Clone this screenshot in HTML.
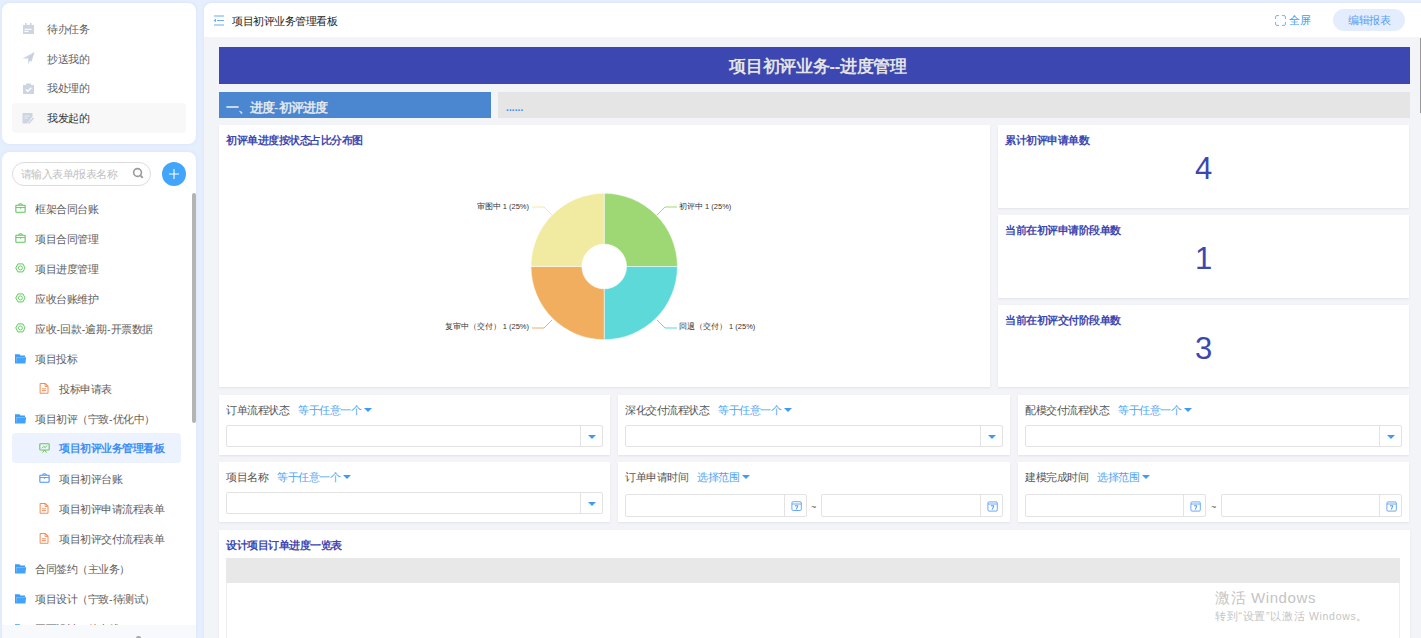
<!DOCTYPE html>
<html><head><meta charset="utf-8">
<style>
*{box-sizing:border-box;margin:0;padding:0}
html,body{width:1421px;height:638px;overflow:hidden}
body{background:#e6effd;font-family:"Liberation Sans",sans-serif;color:#333;position:relative}
.abs{position:absolute}
.panel{position:absolute;background:#fff;border-radius:8px;box-shadow:0 0 4px rgba(120,150,210,0.12)}
.si{position:absolute;font-size:10.5px;letter-spacing:-0.5px;color:#606060;line-height:14px;white-space:nowrap}
.ico{position:absolute}
.card{position:absolute;background:#fff;box-shadow:0 1px 2px rgba(20,20,60,0.07)}
.ctitle{position:absolute;font-size:10.5px;letter-spacing:-0.5px;font-weight:bold;color:#3c47b1;white-space:nowrap;line-height:12px}
.lbl{position:absolute;font-size:10.5px;letter-spacing:-0.5px;color:#555;white-space:nowrap;line-height:12px}
.pl{font-size:7.5px;color:#333;line-height:10px;white-space:nowrap}
.blu{color:#4aa3f5}
.inp{position:absolute;border:1px solid #e3e3e3;border-radius:2px;background:#fff}
.inp .btn{position:absolute;right:0;top:0;bottom:0;border-left:1px solid #e3e3e3}
.tri{position:absolute;width:0;height:0;border-left:4px solid transparent;border-right:4px solid transparent;border-top:4px solid #3d9bf5}
</style></head><body>

<!-- sidebar panel 1 -->
<div class="panel" style="left:2px;top:3px;width:194px;height:140.5px"></div>
<div class="abs" style="left:12px;top:103px;width:174px;height:30px;background:#f8f8f9;border-radius:4px"></div>

<svg class="ico" style="left:22px;top:22px" width="13" height="13" viewBox="0 0 13 13"><rect x="1" y="3" width="11" height="9" fill="#cdd5e3"/><rect x="3" y="1" width="1.6" height="3" fill="#cdd5e3"/><rect x="8" y="1" width="1.6" height="3" fill="#cdd5e3"/><rect x="2.5" y="6.8" width="7" height="1.1" fill="#fff"/><rect x="2.5" y="8.9" width="4" height="1.1" fill="#fff"/></svg>
<svg class="ico" style="left:22px;top:51px" width="13" height="14" viewBox="0 0 13 14"><path d="M0.5 7.5 L12.5 1 L9.5 11 L6.5 7.5 Z" fill="#cdd5e3"/><path d="M6.5 7.5 L12.5 1 L6 13.5 Z" fill="#c3cde0"/></svg>
<svg class="ico" style="left:22px;top:83px" width="13" height="12" viewBox="0 0 13 12"><rect x="1" y="2" width="11" height="9" fill="#cdd5e3"/><rect x="4" y="0.5" width="5" height="2.5" fill="#cdd5e3"/><path d="M3.8 6.5 L5.8 8.3 L9.3 4.8" stroke="#fff" stroke-width="1.3" fill="none"/></svg>
<svg class="ico" style="left:22px;top:112px" width="13" height="13" viewBox="0 0 13 13"><path d="M0.5 1 H10.5 V4.5 L5 11.5 H0.5 Z" fill="#cdd5e3"/><rect x="2.5" y="3.5" width="5" height="1.1" fill="#e8edf5"/><rect x="2.5" y="5.6" width="3" height="1.1" fill="#e8edf5"/><path d="M6.5 11.5 L11.5 6" stroke="#cdd5e3" stroke-width="1.6"/></svg>
<div class="si" style="left:47px;top:22px">待办任务</div>
<div class="si" style="left:47px;top:52px">抄送我的</div>
<div class="si" style="left:47px;top:81px">我处理的</div>
<div class="si" style="left:47px;top:111px;color:#333">我发起的</div>

<!-- sidebar panel 2 -->
<div class="panel" style="left:2px;top:152px;width:194px;height:500px"></div>
<div class="abs" style="left:12px;top:162px;width:139px;height:24px;border:1px solid #dcdcdc;border-radius:12px"></div>
<div class="si" style="left:20.5px;top:167px;font-size:10.5px;color:#c0c0c0">请输入表单/报表名称</div>
<div class="abs" style="left:162px;top:162px;width:24px;height:24px;border-radius:50%;background:#42a5fc"></div><svg class="ico" style="left:162px;top:162px" width="24" height="24"><path d="M7 12 H17 M12 7 V17" stroke="#fff" stroke-width="1.1"/></svg><svg class="ico" style="left:131px;top:166px" width="14" height="14"><circle cx="6.5" cy="6.5" r="3.9" stroke="#999" stroke-width="1.6" fill="none"/><path d="M9.3 9.3 L11.8 11.8" stroke="#999" stroke-width="1.8"/></svg>
<div class="abs" style="left:192px;top:193px;width:4px;height:230px;background:#b4b4b4;border-radius:2px"></div>

<svg class="ico" style="left:15px;top:203px" width="11" height="10" viewBox="0 0 12 11"><path d="M4 2.2 Q4 0.8 6 0.8 Q8 0.8 8 2.2" stroke="#5cc85c" stroke-width="1.2" fill="none"/><rect x="0.9" y="2.4" width="10.2" height="7.8" stroke="#5cc85c" stroke-width="1.2" fill="none" rx="0.6"/><path d="M1 5 H11" stroke="#5cc85c" stroke-width="1"/><path d="M4.8 5 L6 6.6 L7.2 5 Z" fill="#5cc85c"/></svg><div class="si" style="left:35px;top:202px">框架合同台账</div>
<svg class="ico" style="left:15px;top:233px" width="11" height="10" viewBox="0 0 12 11"><path d="M4 2.2 Q4 0.8 6 0.8 Q8 0.8 8 2.2" stroke="#5cc85c" stroke-width="1.2" fill="none"/><rect x="0.9" y="2.4" width="10.2" height="7.8" stroke="#5cc85c" stroke-width="1.2" fill="none" rx="0.6"/><path d="M1 5 H11" stroke="#5cc85c" stroke-width="1"/><path d="M4.8 5 L6 6.6 L7.2 5 Z" fill="#5cc85c"/></svg><div class="si" style="left:35px;top:232px">项目合同管理</div>
<svg class="ico" style="left:15px;top:263px" width="11" height="10" viewBox="0 0 12 11"><path d="M3.2 1 H8.6 L11 5.4 L8.6 9.8 H3.2 L0.8 5.4 Z" stroke="#5ccb5c" stroke-width="1.1" fill="none"/><circle cx="5.9" cy="5.4" r="2.2" stroke="#5ccb5c" stroke-width="1" fill="none"/></svg><div class="si" style="left:35px;top:262px">项目进度管理</div>
<svg class="ico" style="left:15px;top:293px" width="11" height="10" viewBox="0 0 12 11"><path d="M3.2 1 H8.6 L11 5.4 L8.6 9.8 H3.2 L0.8 5.4 Z" stroke="#5ccb5c" stroke-width="1.1" fill="none"/><circle cx="5.9" cy="5.4" r="2.2" stroke="#5ccb5c" stroke-width="1" fill="none"/></svg><div class="si" style="left:35px;top:292px">应收台账维护</div>
<svg class="ico" style="left:15px;top:323px" width="11" height="10" viewBox="0 0 12 11"><path d="M3.2 1 H8.6 L11 5.4 L8.6 9.8 H3.2 L0.8 5.4 Z" stroke="#5ccb5c" stroke-width="1.1" fill="none"/><circle cx="5.9" cy="5.4" r="2.2" stroke="#5ccb5c" stroke-width="1" fill="none"/></svg><div class="si" style="left:35px;top:322px">应收<span style="margin:0 0.6px">-</span>回款<span style="margin:0 0.6px">-</span>逾期<span style="margin:0 0.6px">-</span>开票数据</div>
<svg class="ico" style="left:15px;top:354px" width="12" height="10" viewBox="0 0 12 10"><path d="M0 0.3 H4.5 L5.5 1.5 H10 V3 H1.6 V9.5 H0 Z" fill="#3f9cf8"/><path d="M1.7 3.2 H11.2 L10.4 9.5 H1.2 Z" fill="#42a3fb"/></svg><div class="si" style="left:35px;top:352px">项目投标</div>
<svg class="ico" style="left:39px;top:383px" width="10.5" height="11" viewBox="0 0 11 12"><path d="M1 1.2 Q1 0.6 1.6 0.6 H6.6 L9.6 3.6 V10.6 Q9.6 11.2 9 11.2 H1.6 Q1 11.2 1 10.6 Z" stroke="#f98a55" stroke-width="1.1" fill="none"/><path d="M6.4 0.8 V3.8 H9.4" stroke="#f98a55" stroke-width="1" fill="none"/><path d="M3 6.3 H7.5 M3 8.2 H7.5" stroke="#f98a55" stroke-width="1"/></svg><div class="si" style="left:59px;top:382px">投标申请表</div>
<svg class="ico" style="left:15px;top:414px" width="12" height="10" viewBox="0 0 12 10"><path d="M0 0.3 H4.5 L5.5 1.5 H10 V3 H1.6 V9.5 H0 Z" fill="#3f9cf8"/><path d="M1.7 3.2 H11.2 L10.4 9.5 H1.2 Z" fill="#42a3fb"/></svg><div class="si" style="left:35px;top:412px">项目初评（宁致<span style="margin:0 0.6px">-</span>优化中）</div>
<div class="abs" style="left:12px;top:433px;width:169px;height:30px;background:#ecf3fe;border-radius:4px"></div>
<svg class="ico" style="left:39px;top:443px" width="11" height="10" viewBox="0 0 11 10"><rect x="0.8" y="0.8" width="9.4" height="6.2" rx="0.8" stroke="#6cc35e" stroke-width="1.1" fill="none"/><path d="M3 5.2 L4.8 3.4 L6.2 4.6 L8 2.6 M3.5 9.6 L5.5 7 L7.5 9.6" stroke="#6cc35e" stroke-width="1" fill="none"/></svg><div class="si" style="left:59px;top:441px;color:#3d8ef7;font-weight:bold">项目初评业务管理看板</div>
<svg class="ico" style="left:39px;top:473px" width="11" height="10" viewBox="0 0 12 11"><path d="M4 2.2 Q4 0.8 6 0.8 Q8 0.8 8 2.2" stroke="#4a93f5" stroke-width="1.2" fill="none"/><rect x="0.9" y="2.4" width="10.2" height="7.8" stroke="#4a93f5" stroke-width="1.2" fill="none" rx="0.6"/><path d="M1 5 H11" stroke="#4a93f5" stroke-width="1"/><path d="M4.8 5 L6 6.6 L7.2 5 Z" fill="#4a93f5"/></svg><div class="si" style="left:59px;top:472px">项目初评台账</div>
<svg class="ico" style="left:39px;top:503px" width="10.5" height="11" viewBox="0 0 11 12"><path d="M1 1.2 Q1 0.6 1.6 0.6 H6.6 L9.6 3.6 V10.6 Q9.6 11.2 9 11.2 H1.6 Q1 11.2 1 10.6 Z" stroke="#f98a55" stroke-width="1.1" fill="none"/><path d="M6.4 0.8 V3.8 H9.4" stroke="#f98a55" stroke-width="1" fill="none"/><path d="M3 6.3 H7.5 M3 8.2 H7.5" stroke="#f98a55" stroke-width="1"/></svg><div class="si" style="left:59px;top:502px">项目初评申请流程表单</div>
<svg class="ico" style="left:39px;top:533px" width="10.5" height="11" viewBox="0 0 11 12"><path d="M1 1.2 Q1 0.6 1.6 0.6 H6.6 L9.6 3.6 V10.6 Q9.6 11.2 9 11.2 H1.6 Q1 11.2 1 10.6 Z" stroke="#f98a55" stroke-width="1.1" fill="none"/><path d="M6.4 0.8 V3.8 H9.4" stroke="#f98a55" stroke-width="1" fill="none"/><path d="M3 6.3 H7.5 M3 8.2 H7.5" stroke="#f98a55" stroke-width="1"/></svg><div class="si" style="left:59px;top:532px">项目初评交付流程表单</div>
<svg class="ico" style="left:15px;top:564px" width="12" height="10" viewBox="0 0 12 10"><path d="M0 0.3 H4.5 L5.5 1.5 H10 V3 H1.6 V9.5 H0 Z" fill="#3f9cf8"/><path d="M1.7 3.2 H11.2 L10.4 9.5 H1.2 Z" fill="#42a3fb"/></svg><div class="si" style="left:35px;top:562px">合同签约（主业务）</div>
<svg class="ico" style="left:15px;top:594px" width="12" height="10" viewBox="0 0 12 10"><path d="M0 0.3 H4.5 L5.5 1.5 H10 V3 H1.6 V9.5 H0 Z" fill="#3f9cf8"/><path d="M1.7 3.2 H11.2 L10.4 9.5 H1.2 Z" fill="#42a3fb"/></svg><div class="si" style="left:35px;top:592px">项目设计（宁致<span style="margin:0 0.6px">-</span>待测试）</div>
<svg class="ico" style="left:15px;top:624px" width="12" height="10" viewBox="0 0 12 10"><path d="M0 0.3 H4.5 L5.5 1.5 H10 V3 H1.6 V9.5 H0 Z" fill="#3f9cf8"/><path d="M1.7 3.2 H11.2 L10.4 9.5 H1.2 Z" fill="#42a3fb"/></svg><div class="si" style="left:35px;top:622px">平面设计（待上线）</div>
<div class="abs" style="left:2px;top:625px;width:194px;height:13px;background:#f7f9fd"></div><div class="abs" style="left:136px;top:636px;width:5px;height:2px;background:#aaa;border-radius:2px 2px 0 0"></div>

<!-- main -->
<div class="panel" style="left:204px;top:3px;width:1230px;height:700px;background:#f3f4f8;border-radius:8px 0 0 0;overflow:hidden">
  <div class="abs" style="left:0;top:0;right:0;height:34px;background:#fff"></div>
</div>
<div class="si" style="left:232px;top:13.5px;color:#222;font-size:10.5px">项目初评业务管理看板</div>
<svg class="ico" style="left:213px;top:15px" width="12" height="11" viewBox="0 0 12 11"><path d="M1 1 H11 M4 5.5 H11 M1 10 H11" stroke="#6aaaf7" stroke-width="1.1"/><path d="M0.5 5.5 L3 3.8 V7.2 Z" fill="#6aaaf7"/></svg><svg class="ico" style="left:1275px;top:15px" width="11" height="11" viewBox="0 0 11 11"><path d="M0.6 4 V1.8 Q0.6 0.6 1.8 0.6 H4 M7 0.6 H9.2 Q10.4 0.6 10.4 1.8 V4 M10.4 7 V9.2 Q10.4 10.4 9.2 10.4 H7 M4 10.4 H1.8 Q0.6 10.4 0.6 9.2 V7" stroke="#5aa8f7" stroke-width="0.9" fill="none"/></svg><div class="si" style="left:1289px;top:13px;color:#3d9bf5;font-size:10.5px">全屏</div>
<div class="abs" style="left:1333px;top:8.5px;width:72px;height:22px;border-radius:11px;background:#e3edfd"></div>
<div class="si" style="left:1348px;top:13px;color:#5b9cf0;font-size:10.5px">编辑报表</div>

<div class="abs" style="left:1420px;top:38px;width:1px;height:75px;background:#999"></div>
<!-- banner -->
<div class="abs" style="left:219px;top:47px;width:1191px;height:37px;background:#3c47b1"></div>
<div class="abs" style="left:219px;top:56px;width:1191px;text-align:center;font-size:16.5px;letter-spacing:-0.25px;font-weight:bold;color:#e4e4e4;line-height:20px;padding-left:7px">项目初评业务--进度管理</div>

<div class="abs" style="left:219px;top:92px;width:272px;height:26px;background:#4a87d0"></div>
<div class="abs" style="left:226px;top:100px;font-family:'Liberation Serif',serif;font-weight:bold;font-size:12.5px;letter-spacing:-1px;color:#e2e7ee;line-height:16px">一、进度<span style="letter-spacing:0.5px">-</span>初评进度</div>
<div class="abs" style="left:498px;top:92px;width:912px;height:26px;background:#e5e5e5"></div>
<div class="abs" style="left:506px;top:101.5px;font-size:10px;font-weight:bold;letter-spacing:0.1px;color:#3a8cf5;line-height:12px">......</div>

<!-- chart card -->
<div class="card" style="left:219px;top:125px;width:771px;height:262px"></div>
<div class="ctitle" style="left:226px;top:134px">初评单进度按状态占比分布图</div><svg class="abs" style="left:219px;top:125px" width="771" height="263"><path d="M385.20 68.30 A73.2 73.2 0 0 1 458.40 141.50 L407.60 141.50 A22.4 22.4 0 0 0 385.20 119.10 Z" fill="#9ed874" stroke="#fff" stroke-width="0.5"/><path d="M458.40 141.50 A73.2 73.2 0 0 1 385.20 214.70 L385.20 163.90 A22.4 22.4 0 0 0 407.60 141.50 Z" fill="#5dd9d9" stroke="#fff" stroke-width="0.5"/><path d="M385.20 214.70 A73.2 73.2 0 0 1 312.00 141.50 L362.80 141.50 A22.4 22.4 0 0 0 385.20 163.90 Z" fill="#f0ae5e" stroke="#fff" stroke-width="0.5"/><path d="M312.00 141.50 A73.2 73.2 0 0 1 385.20 68.30 L385.20 119.10 A22.4 22.4 0 0 0 362.80 141.50 Z" fill="#f1eaa1" stroke="#fff" stroke-width="0.5"/><path d="M438 90 L446 82 H458" stroke="#9ed874" fill="none" stroke-width="1"/><path d="M438 195 L446 203 H458" stroke="#5dd9d9" fill="none" stroke-width="1"/><path d="M333 195 L325 203 H313" stroke="#f0ae5e" fill="none" stroke-width="1"/><path d="M333 90 L325 82 H313" stroke="#f1eaa1" fill="none" stroke-width="1"/></svg><div class="abs pl" style="left:679px;top:202px">初评中 1 (25%)</div><div class="abs pl" style="left:679px;top:322px">回退（交付） 1 (25%)</div><div class="abs pl" style="right:892px;top:202px;text-align:right">审图中 1 (25%)</div><div class="abs pl" style="right:892px;top:322px;text-align:right">复审中（交付） 1 (25%)</div>

<!-- stat cards -->
<div class="card" style="left:998px;top:125px;width:411px;height:82.5px"></div>
<div class="ctitle" style="left:1005px;top:134px">累计初评申请单数</div>
<div class="abs" style="left:998px;top:148.5px;width:411px;text-align:center;font-size:31px;color:#3c47b1;line-height:40px">4</div>
<div class="card" style="left:998px;top:215px;width:411px;height:82.5px"></div>
<div class="ctitle" style="left:1005px;top:224px">当前在初评申请阶段单数</div>
<div class="abs" style="left:998px;top:238.5px;width:411px;text-align:center;font-size:31px;color:#3c47b1;line-height:40px">1</div>
<div class="card" style="left:998px;top:305px;width:411px;height:82px"></div>
<div class="ctitle" style="left:1005px;top:314px">当前在初评交付阶段单数</div>
<div class="abs" style="left:998px;top:328.5px;width:411px;text-align:center;font-size:31px;color:#3c47b1;line-height:40px">3</div>

<!-- filter cards row 1 -->
<div class="card" style="left:219px;top:395px;width:391px;height:60px"></div>
<div class="card" style="left:618px;top:395px;width:392px;height:60px"></div>
<div class="card" style="left:1018px;top:395px;width:391px;height:60px"></div>
<!-- row 2 -->
<div class="card" style="left:219px;top:462px;width:391px;height:60px"></div>
<div class="card" style="left:618px;top:462px;width:392px;height:60px"></div>
<div class="card" style="left:1018px;top:462px;width:391px;height:60px"></div>

<div class="lbl" style="left:226px;top:404px">订单流程状态<span class="blu" style="margin-left:9px">等于任意一个</span><span class="tri" style="position:relative;display:inline-block;top:-2px;margin-left:3px"></span></div><div class="inp" style="left:226px;top:425px;width:377px;height:22px"><div class="btn" style="width:22px"><span class="tri" style="left:7px;top:9px"></span></div></div><div class="lbl" style="left:625px;top:404px">深化交付流程状态<span class="blu" style="margin-left:9px">等于任意一个</span><span class="tri" style="position:relative;display:inline-block;top:-2px;margin-left:3px"></span></div><div class="inp" style="left:625px;top:425px;width:378px;height:22px"><div class="btn" style="width:22px"><span class="tri" style="left:7px;top:9px"></span></div></div><div class="lbl" style="left:1025px;top:404px">配模交付流程状态<span class="blu" style="margin-left:9px">等于任意一个</span><span class="tri" style="position:relative;display:inline-block;top:-2px;margin-left:3px"></span></div><div class="inp" style="left:1025px;top:425px;width:377px;height:22px"><div class="btn" style="width:22px"><span class="tri" style="left:7px;top:9px"></span></div></div><div class="lbl" style="left:226px;top:471px">项目名称<span class="blu" style="margin-left:9px">等于任意一个</span><span class="tri" style="position:relative;display:inline-block;top:-2px;margin-left:3px"></span></div><div class="inp" style="left:226px;top:492px;width:377px;height:22px"><div class="btn" style="width:22px"><span class="tri" style="left:7px;top:9px"></span></div></div><div class="lbl" style="left:625px;top:471px">订单申请时间<span class="blu" style="margin-left:9px">选择范围</span><span class="tri" style="position:relative;display:inline-block;top:-2px;margin-left:3px"></span></div><div class="inp" style="left:625px;top:494px;width:182px;height:22.5px"><div class="btn" style="width:22px"><svg style="position:absolute;left:6px;top:6px" width="11" height="11" viewBox="0 0 11 11"><rect x="0.9" y="0.7" width="9.4" height="8.8" rx="1.2" stroke="#5aa0f7" stroke-width="0.9" fill="none"/><path d="M1 3 H10.2" stroke="#5aa0f7" stroke-width="0.9"/><path d="M4 4.8 H6.9 L5.2 8.6" stroke="#4a93f5" stroke-width="1" fill="none"/></svg></div></div><div class="inp" style="left:821px;top:494px;width:182px;height:22.5px"><div class="btn" style="width:22px"><svg style="position:absolute;left:6px;top:6px" width="11" height="11" viewBox="0 0 11 11"><rect x="0.9" y="0.9" width="9.4" height="9.2" rx="1.2" stroke="#5aa0f7" stroke-width="0.9" fill="none"/><path d="M1 3 H10.2" stroke="#5aa0f7" stroke-width="0.9"/><path d="M4 4.8 H6.9 L5.2 8.6" stroke="#4a93f5" stroke-width="1" fill="none"/></svg></div></div><div class="abs" style="left:811px;top:502px;font-size:9px;color:#555;line-height:10px">~</div><div class="lbl" style="left:1025px;top:471px">建模完成时间<span class="blu" style="margin-left:9px">选择范围</span><span class="tri" style="position:relative;display:inline-block;top:-2px;margin-left:3px"></span></div><div class="inp" style="left:1025px;top:494px;width:181px;height:22.5px"><div class="btn" style="width:22px"><svg style="position:absolute;left:6px;top:6px" width="11" height="11" viewBox="0 0 11 11"><rect x="0.9" y="0.9" width="9.4" height="9.2" rx="1.2" stroke="#5aa0f7" stroke-width="0.9" fill="none"/><path d="M1 3 H10.2" stroke="#5aa0f7" stroke-width="0.9"/><path d="M4 4.8 H6.9 L5.2 8.6" stroke="#4a93f5" stroke-width="1" fill="none"/></svg></div></div><div class="inp" style="left:1221px;top:494px;width:181px;height:22.5px"><div class="btn" style="width:22px"><svg style="position:absolute;left:6px;top:6px" width="11" height="11" viewBox="0 0 11 11"><rect x="0.9" y="0.9" width="9.4" height="9.2" rx="1.2" stroke="#5aa0f7" stroke-width="0.9" fill="none"/><path d="M1 3 H10.2" stroke="#5aa0f7" stroke-width="0.9"/><path d="M4 4.8 H6.9 L5.2 8.6" stroke="#4a93f5" stroke-width="1" fill="none"/></svg></div></div><div class="abs" style="left:1211px;top:502px;font-size:9px;color:#555;line-height:10px">~</div><!-- table card -->
<div class="card" style="left:219px;top:530px;width:1191px;height:120px"></div>
<div class="ctitle" style="left:226px;top:539px">设计项目订单进度一览表</div>
<div class="abs" style="left:226px;top:558px;width:1174px;height:90px;border:1px solid #eee;border-top:none"></div>
<div class="abs" style="left:226px;top:558px;width:1174px;height:25px;background:#e8e8e8"></div>

<div class="abs" style="left:1215px;top:588px;font-size:15px;letter-spacing:0.6px;color:#c4c4c4;line-height:20px;white-space:nowrap">激活 Windows</div><div class="abs" style="left:1215px;top:609px;font-size:10.5px;letter-spacing:0.7px;color:#c4c4c4;line-height:14px;white-space:nowrap">转到“设置”以激活 Windows。</div></body></html>
